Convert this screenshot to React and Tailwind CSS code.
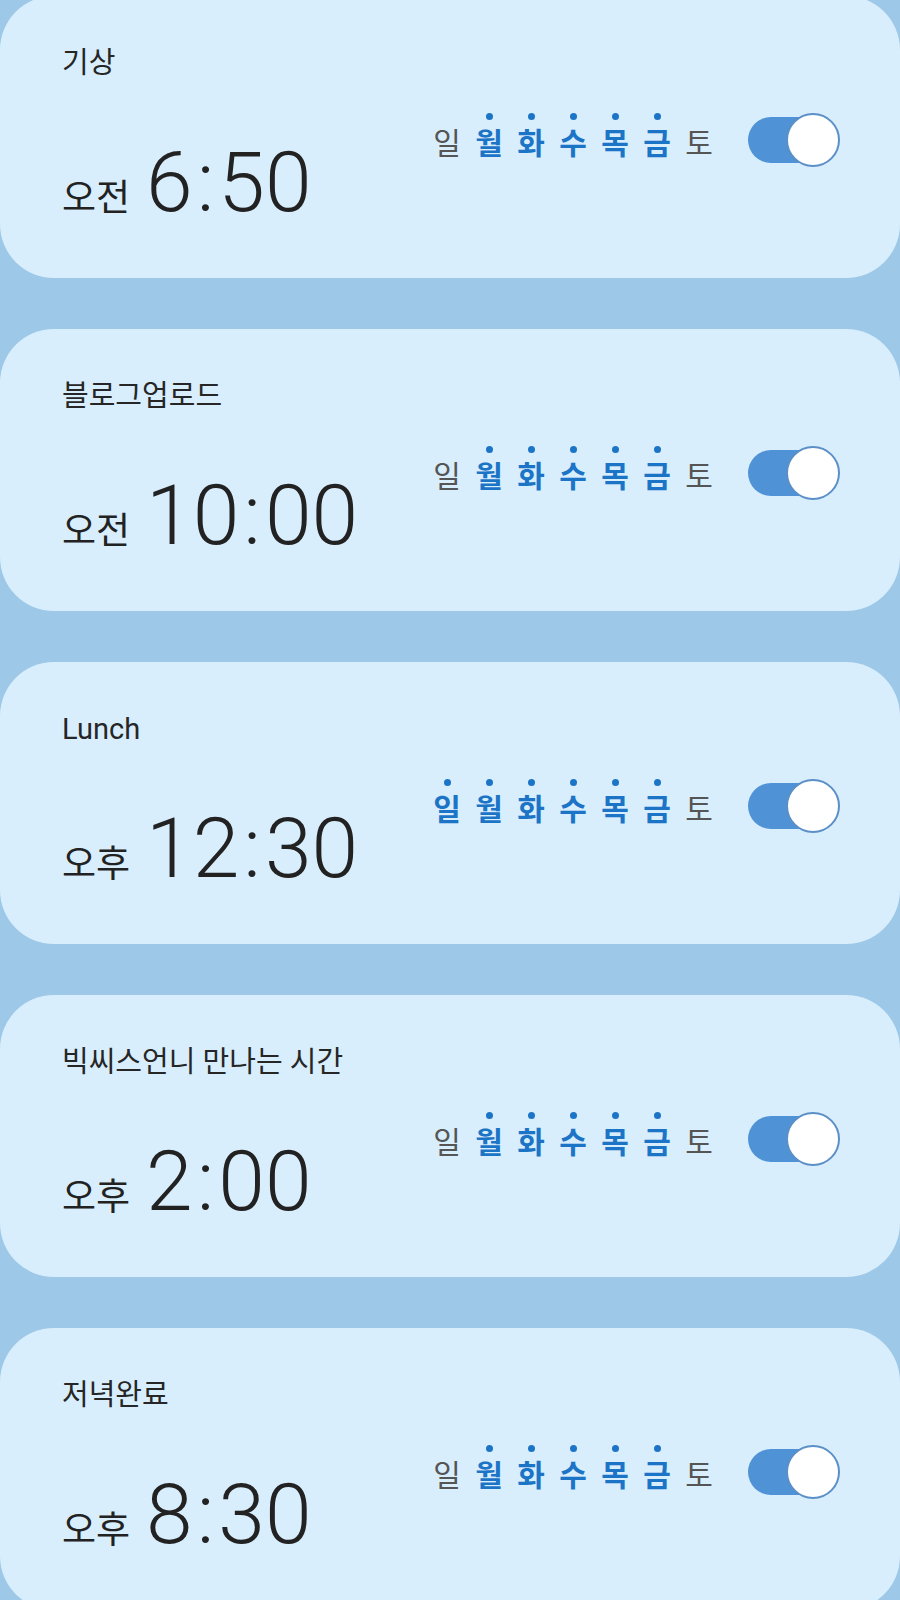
import React from "react";

const alarms = [
  { title: "기상", ampm: "오전", time: "6:50", days: [0, 1, 1, 1, 1, 1, 0] },
  { title: "블로그업로드", ampm: "오전", time: "10:00", days: [0, 1, 1, 1, 1, 1, 0] },
  { title: "Lunch", ampm: "오후", time: "12:30", days: [1, 1, 1, 1, 1, 1, 0] },
  { title: "빅씨스언니 만나는 시간", ampm: "오후", time: "2:00", days: [0, 1, 1, 1, 1, 1, 0] },
  { title: "저녁완료", ampm: "오후", time: "8:30", days: [0, 1, 1, 1, 1, 1, 0] },
];

const dayNames = ["일", "월", "화", "수", "목", "금", "토"];

const font = { fontFamily: '"Roboto", "Noto Sans CJK KR", sans-serif' };

function Card({ a }) {
  const [h, m] = a.time.split(":");
  return (
    <div className="relative h-[282px] w-full shrink-0 rounded-[54px] bg-[#d8eefd] flex justify-between pl-[62px] pr-[60px]">
      <div className="flex flex-col">
        <div className="mt-[50px] text-[29px] leading-[34px] text-[#262626]">{a.title}</div>
        <div className="mt-[61px] flex items-baseline">
          <span className="text-[37px] leading-none text-[#222]">{a.ampm}</span>
          <span className="ml-[16px] text-[84px] leading-none font-light text-[#222]">
            {h}
            <span className="mx-[4px]">:</span>
            {m}
          </span>
        </div>
      </div>
      <div className="mt-[117px] flex items-start self-start">
        <div className="flex gap-[12px]">
          {dayNames.map((d, i) => (
            <div key={d} className="flex flex-col items-center w-[30px]">
              <div className={"h-[7px] w-[7px] rounded-full " + (a.days[i] ? "bg-[#1c74c6]" : "bg-transparent")} />
              <div
                className={
                  "mt-[7px] text-[30px] leading-[34px] " +
                  (a.days[i] ? "text-[#1c74c6] font-bold" : "text-[#555] font-normal")
                }
              >
                {d}
              </div>
            </div>
          ))}
        </div>
        <div className="relative ml-[34px] mt-[0px] h-[54px] w-[92px]">
          <div className="absolute left-0 top-[4px] h-[46px] w-[80px] rounded-full bg-[#4f92d6]" />
          <div className="absolute right-0 top-0 h-[54px] w-[54px] rounded-full bg-white border-2 border-[#5b8fc7]" />
        </div>
      </div>
    </div>
  );
}

export default function App() {
  return (
    <div className="h-[1600px] w-[900px] overflow-hidden bg-[#9dc8e7]" style={font}>
      <div className="-mt-[4px] flex flex-col gap-[51px]">
        {alarms.map((a) => (
          <Card key={a.title} a={a} />
        ))}
      </div>
    </div>
  );
}
